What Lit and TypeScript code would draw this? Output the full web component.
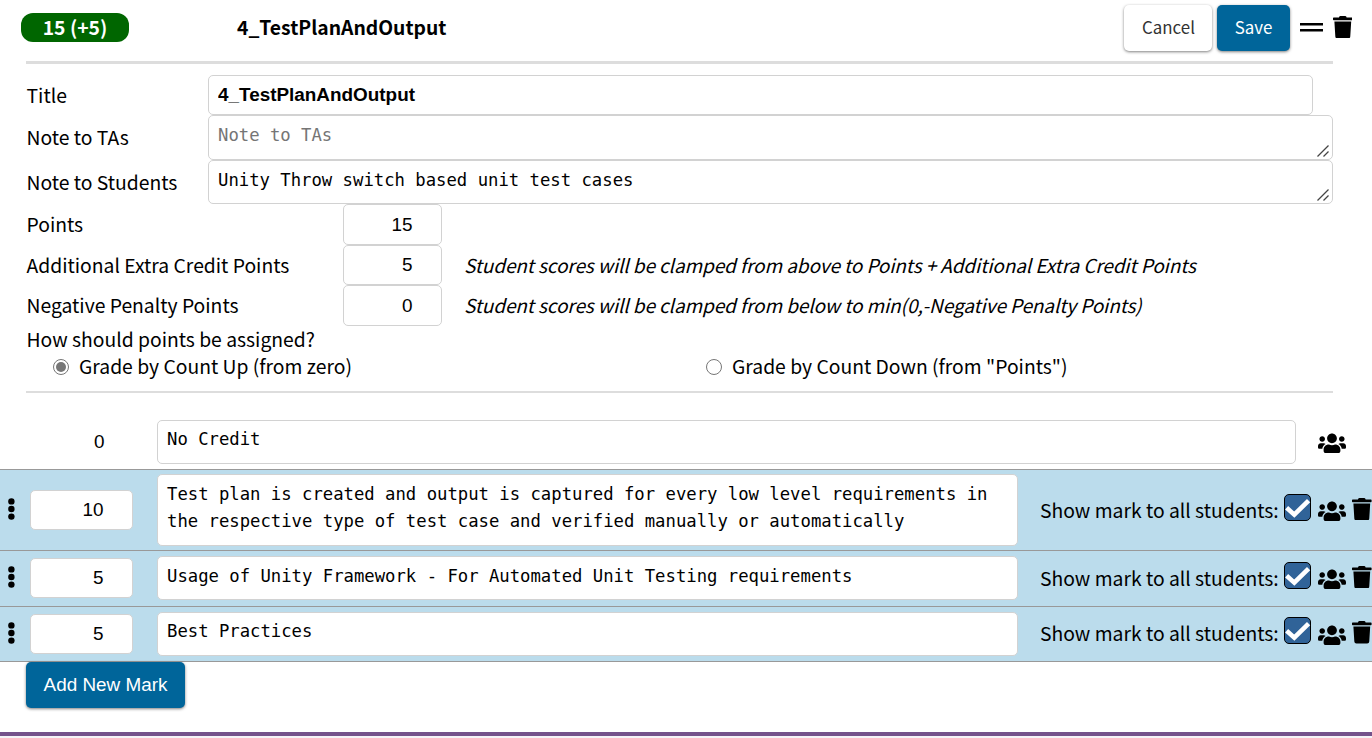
import { LitElement, html, css, svg } from "lit";
import { customElement } from "lit/decorators.js";

const users = html`<svg class="users" viewBox="0 0 640 512"><path d="M96 224c35.3 0 64-28.7 64-64s-28.7-64-64-64-64 28.7-64 64 28.7 64 64 64zm448 0c35.3 0 64-28.7 64-64s-28.7-64-64-64-64 28.7-64 64 28.7 64 64 64zm32 32h-64c-17.6 0-33.5 7.1-45.1 18.6 40.3 22.1 68.9 62 75.1 109.4h66c17.7 0 32-14.3 32-32v-32c0-35.3-28.7-64-64-64zm-256 0c61.9 0 112-50.1 112-112S381.9 32 320 32 208 82.1 208 144s50.1 112 112 112zm76.8 32h-8.3c-20.8 10-43.9 16-68.5 16s-47.6-6-68.5-16h-8.3C179.6 288 128 339.6 128 403.2V432c0 26.5 21.5 48 48 48h288c26.5 0 48-21.5 48-48v-28.8c0-63.6-51.6-115.2-115.2-115.2zm-223.7-13.4C161.5 263.1 145.6 256 128 256H64c-35.3 0-64 28.7-64 64v32c0 17.7 14.3 32 32 32h65.9c6.3-47.4 34.9-87.3 75.2-109.4z"/></svg>`;
const trash = html`<svg class="trash" viewBox="0 0 448 512"><path d="M432 32H312l-9.4-18.7A24 24 0 0 0 281.1 0H166.8a23.72 23.72 0 0 0-21.4 13.3L136 32H16A16 16 0 0 0 0 48v32a16 16 0 0 0 16 16h416a16 16 0 0 0 16-16V48a16 16 0 0 0-16-16zM53.2 467a48 48 0 0 0 47.9 45h245.8a48 48 0 0 0 47.9-45L416 128H32z"/></svg>`;
const bars = html`<svg class="bars" viewBox="0 0 23 9"><path d="M0 0h23v2.4H0zM0 6h23v2.4H0z"/></svg>`;
const dots = html`<svg class="dots" viewBox="0 0 8 24">${[4.4, 12, 19.6].map((y) => svg`<circle cx="4.4" cy=${y} r="3.2"/>`)}</svg>`;
const grip = html`<svg class="grip" viewBox="0 0 12 12"><path d="M0.5 11.5L11.5 .5M6.5 11.5L11.5 6.5"/></svg>`;
const check = html`<svg class="check" viewBox="0 0 27 27"><rect x=".5" y=".5" width="26" height="26" rx="4.5"/><path d="M2.6 13.8L10.3 20.6L24.6 6.6"/></svg>`;

interface Mark { points: number; text: string; kind: string; }

@customElement("app-root")
export class AppRoot extends LitElement {
  static styles = css`
    :host { display: block; height: 738px; overflow: hidden; background: #fff; color: #000;
      font: 19.32px/26px "Noto Sans CJK SC", sans-serif; }
    * { box-sizing: border-box; }
    svg { display: block; flex: none; }
    input, textarea { display: block; margin: 0; border: 1px solid #d2d2d2; border-radius: 5px; background: #fff; color: #000; outline: 0; resize: none; overflow: hidden; }
    input { font: 18.9px/22px "Liberation Sans", sans-serif; height: 41px; padding: 0 9px; }
    textarea { font: 17.25px/27px "DejaVu Sans Mono", monospace; padding: 6px 9px; width: 100%; height: 100%; }
    textarea::placeholder { color: #757575; opacity: 1; }
    .header { height: 61px; display: flex; align-items: flex-start; padding-left: 21px; }
    .badge { width: 108px; height: 29px; margin-top: 13px; border-radius: 12px; background: #060; color: #fff; font-weight: 700; line-height: 28px; text-align: center; }
    .heading { margin: 14px 0 0 108px; width: 887px; flex: none; font-weight: 700; }
    button { height: 46px; border: 0; border-radius: 5px; margin: 5px 0 0; padding: 0 0 2px; flex: none; box-shadow: 0 1px 3px rgba(0,0,0,.5); font: 16.9px/44px "Noto Sans CJK SC", sans-serif; }
    .cancel { width: 88px; background: #fff; color: #333; margin-right: 5px; padding-left: 1px; }
    .primary { width: 73px; background: #00659a; color: #fff; }
    .add { width: 159px; font: 18.9px/46px "Liberation Sans", sans-serif; margin: 0 0 0 26px; padding: 0; }
    .bars { width: 23px; height: 9px; margin: 23px 10px 0 10px; }
    .header .trash { margin-top: 16px; margin-left: -.3px; }
    .rule { margin: 0 39px 0 26px; height: 3px; background: #ddd; }
    .thin { height: 2px; }
    .form { padding: 11px 39px 0 26px; height: 327px; }
    .line { display: flex; }
    .label { width: 182px; flex: none; padding-left: .5px; }
    .wide { width: 317px; }
    .title { width: 1105px; font-weight: 700; height: 40px; }
    .area { position: relative; flex: 1; height: 45px; }
    .short { height: 44px; }
    .grip { position: absolute; right: 4px; bottom: 3px; width: 12px; height: 12px; stroke: #444; stroke-width: 1.3; fill: none; }
    .num { width: 99px; text-align: right; padding-right: 28.5px; }
    .h40 { height: 40px; }
    .hint { font-style: italic; font-size: 19px; letter-spacing: -.1px; margin-left: 22px; }
    .d7 { padding-top: 7px; } .d9 { padding-top: 9px; }
    .question { height: 27px; line-height: 27px; padding-left: .5px; }
    .radios { display: flex; }
    .radio { width: 653px; display: flex; align-items: center; line-height: 27px; height: 27px; white-space: nowrap; }
    .radio label { height: 27px; }
    .circle { width: 16px; height: 16px; border: 1.2px solid #767676; border-radius: 50%; margin: 0 10px 0 27px; display: flex; align-items: center; justify-content: center; }
    .dot { width: 10px; height: 10px; border-radius: 50%; background: #767676; }
    .marks { padding-top: 22px; }
    .mark { display: flex; align-items: center; border-bottom: 1px solid #999; background: #bbdcec; padding-right: 1px; }
    .none { height: 55px; background: #fff; }
    .tall { height: 81px; } .mid { height: 56px; } .low { height: 55px; }
    .mid { padding-bottom: 1px; } .low { padding-bottom: 1px; }
    .dots { width: 8px; height: 24px; margin: 0 15px 2px 7px; }
    .none .dots { visibility: hidden; }
    .pts { width: 103px; height: 40px; text-align: right; padding-right: 28.5px; margin-right: 24px; }
    .none .pts { border-color: transparent; padding-right: 27.5px; }
    .text { width: 861px; height: 44px; flex: none; }
    .none .text { width: 1139px; margin-right: 22px; }
    .none textarea, .low textarea { padding-top: 5px; }
    .tall .text { height: 72px; }
    .show { width: 244px; margin-left: 22px; white-space: nowrap; flex: none; padding-bottom: 1px; }
    .check { width: 27px; height: 27px; margin-right: 7px; margin-bottom: 6px; fill: #306398; stroke: #000; stroke-width: 1; }
    .check path { fill: none; stroke: #fff; stroke-width: 4.6; }
    .users { width: 28px; height: 22.4px; margin-top: 3px; }
    .trash { width: 19.6px; height: 22.4px; }
    .mark .trash { margin-left: 6px; margin-bottom: 2px; }
    .footer { margin-top: 24px; height: 4px; background: #75528b; }
    .below { height: 2px; background: #f6f4f8; }
  `;

  marks: Mark[] = [
    { points: 0, text: "No Credit", kind: "none" },
    { points: 10, text: "Test plan is created and output is captured for every low level requirements in the respective type of test case and verified manually or automatically", kind: "tall" },
    { points: 5, text: "Usage of Unity Framework - For Automated Unit Testing requirements", kind: "mid" },
    { points: 5, text: "Best Practices", kind: "low" },
  ];

  row(m: Mark) {
    return html`<div class="mark ${m.kind}">${dots}
      <input class="pts" .value=${String(m.points)} />
      <div class="text"><textarea .value=${m.text}></textarea></div>
      ${m.kind === "none" ? users : html`<div class="show">Show mark to all students:</div>${check}${users}${trash}`}
    </div>`;
  }

  render() {
    return html`
      <div class="header">
        <div class="badge">15 (+5)</div>
        <div class="heading">4_TestPlanAndOutput</div>
        <button class="cancel">Cancel</button><button class="primary">Save</button>
        ${bars}${trash}
      </div>
      <div class="rule"></div>
      <div class="form">
        <div class="line"><div class="label d7">Title</div><input class="title" .value=${"4_TestPlanAndOutput"} /></div>
        <div class="line"><div class="label d9">Note to TAs</div><div class="area"><textarea placeholder="Note to TAs"></textarea>${grip}</div></div>
        <div class="line"><div class="label d9">Note to Students</div><div class="area short"><textarea .value=${"Unity Throw switch based unit test cases"}></textarea>${grip}</div></div>
        <div class="line"><div class="label wide d7">Points</div><input class="num" .value=${"15"} /></div>
        <div class="line"><div class="label wide d7">Additional Extra Credit Points</div><input class="num h40" .value=${"5"} /><div class="hint d7">Student scores will be clamped from above to Points + Additional Extra Credit Points</div></div>
        <div class="line"><div class="label wide d7">Negative Penalty Points</div><input class="num" .value=${"0"} /><div class="hint d7">Student scores will be clamped from below to min(0,-Negative Penalty Points)</div></div>
        <div class="question">How should points be assigned?</div>
        <div class="radios">
          <div class="radio"><span class="circle"><span class="dot"></span></span><label>Grade by Count Up (from zero)</label></div>
          <div class="radio"><span class="circle"></span><label>Grade by Count Down (from "Points")</label></div>
        </div>
      </div>
      <div class="rule thin"></div>
      <div class="marks">${this.marks.map((m) => this.row(m))}</div>
      <button class="primary add">Add New Mark</button>
      <div class="footer"></div><div class="below"></div>
    `;
  }
}
